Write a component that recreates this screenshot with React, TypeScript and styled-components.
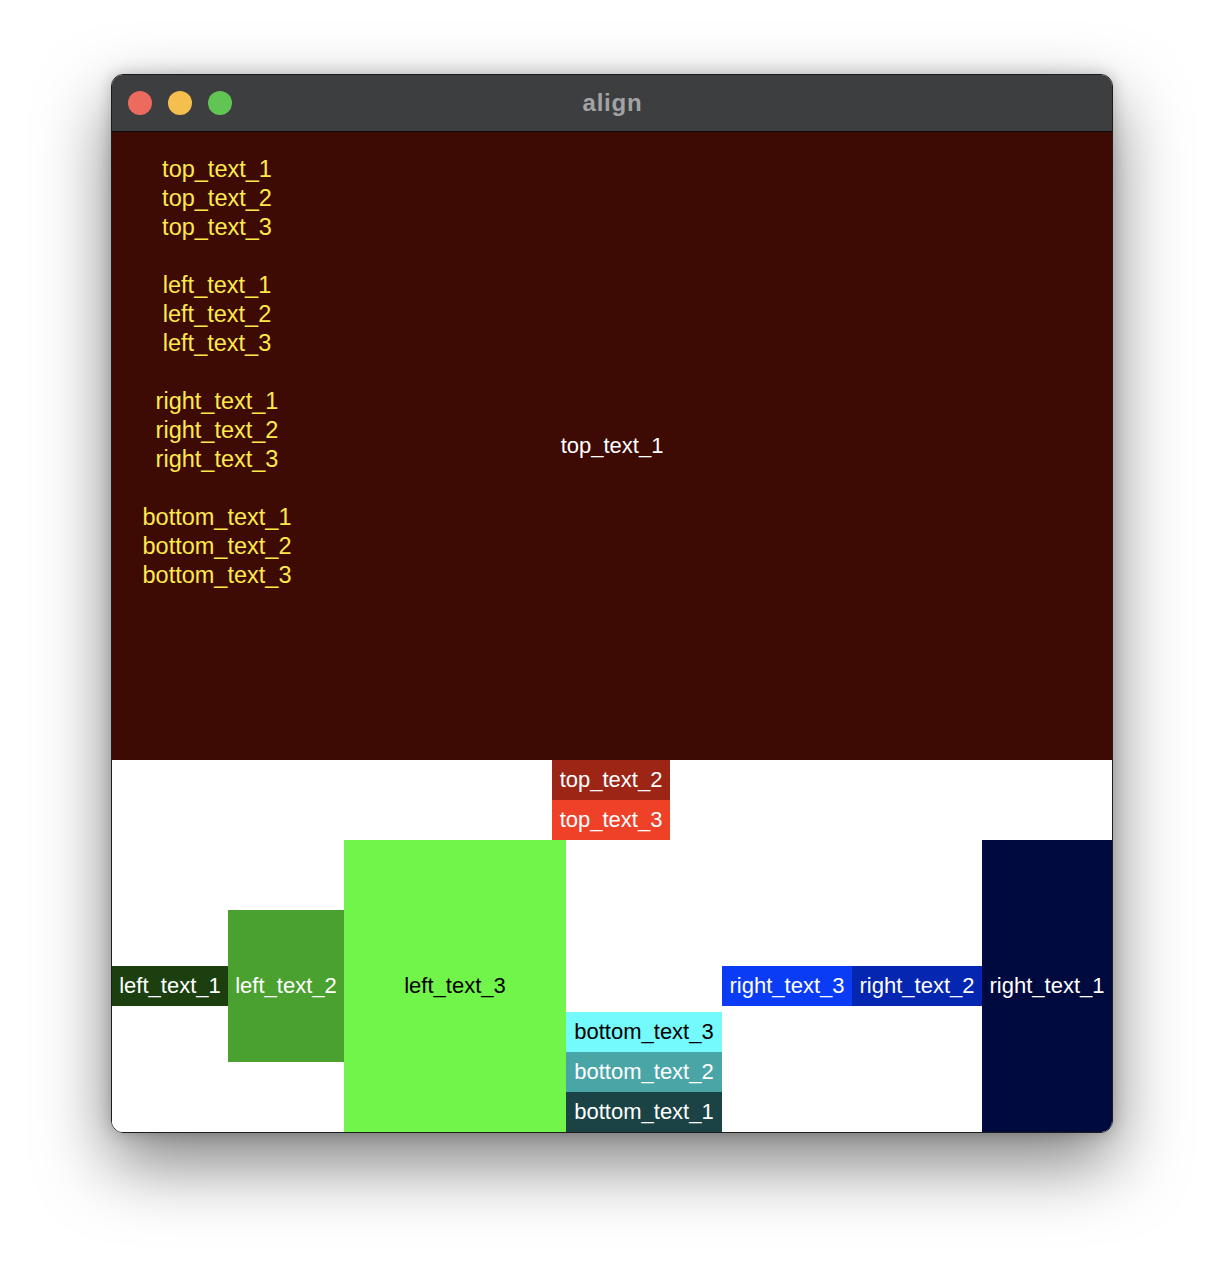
import React from "react";
import styled, { createGlobalStyle } from "styled-components";

const Global = createGlobalStyle`
  html, body { margin: 0; padding: 0; background: #ffffff; }
  body { font-family: "Liberation Sans", Arial, sans-serif; }
`;

const Page = styled.div`
  width: 1224px;
  height: 1280px;
  padding: 74px 0 0 111px;
  box-sizing: border-box;
  background: #ffffff;
`;

const Window = styled.div`
  width: 1002px;
  box-sizing: border-box;
  border: 1px solid #1c1c1c;
  border-radius: 12px;
  overflow: hidden;
  box-shadow: 0 30px 70px rgba(0, 0, 0, 0.5), 0 0 16px rgba(0, 0, 0, 0.22);
  display: flex;
  flex-direction: column;
`;

const TitleBar = styled.div`
  height: 57px;
  box-sizing: border-box;
  border-bottom: 1px solid #0c0c0c;
  background: #3d3e40;
  display: grid;
  grid-template-columns: 1fr;
  align-items: center;
`;

const Lights = styled.div`
  grid-area: 1 / 1;
  display: flex;
  gap: 16px;
  padding-left: 16px;
`;

const Light = styled.span<{ $c: string }>`
  width: 24px;
  height: 24px;
  border-radius: 50%;
  background: ${(p) => p.$c};
`;

const Title = styled.div`
  grid-area: 1 / 1;
  justify-self: center;
  color: #a3a3a4;
  font-family: "Liberation Sans", Arial, sans-serif;
  font-weight: bold;
  font-size: 24px;
  letter-spacing: 0.8px;
  margin-left: 1px;
`;

const Content = styled.div`
  width: 1000px;
  height: 1000px;
  background: #ffffff;
  display: flex;
  flex-direction: column;
  font-family: "Liberation Sans", Arial, sans-serif;
  font-size: 22px;
`;

const TopArea = styled.div`
  height: 628px;
  flex: none;
  background: #3d0a04;
  display: grid;
  grid-template-columns: 1fr;
  grid-template-rows: 1fr;
`;

const List = styled.div`
  grid-area: 1 / 1;
  justify-self: start;
  align-self: start;
  width: 210px;
  padding-top: 23px;
  text-align: center;
  color: #ffe94b;
  font-size: 23.5px;
  line-height: 29px;
  white-space: pre;
`;

const CenterLabel = styled.div`
  grid-area: 1 / 1;
  justify-self: center;
  align-self: center;
  color: #ffffff;
  line-height: 40px;
`;

const Stack = styled.div`
  display: flex;
  flex-direction: column;
  align-items: center;
  padding-right: 2px;
`;

const Row = styled.div`
  height: 292px;
  display: flex;
  align-items: center;
`;

const Label = styled.div<{ $bg: string; $fg?: string; $w: number; $h?: number; $fill?: boolean }>`
  flex: none;
  width: ${(p) => p.$w}px;
  height: ${(p) => (p.$fill ? "auto" : `${p.$h || 40}px`)};
  align-self: ${(p) => (p.$fill ? "stretch" : "auto")};
  background: ${(p) => p.$bg};
  color: ${(p) => p.$fg || "#ffffff"};
  display: flex;
  align-items: center;
  justify-content: center;
  white-space: nowrap;
`;

const BottomCol = styled.div`
  flex: none;
  width: 156px;
  align-self: stretch;
  display: flex;
  flex-direction: column;
  justify-content: flex-end;
`;

const listText = [
  "top_text_1",
  "top_text_2",
  "top_text_3",
  "",
  "left_text_1",
  "left_text_2",
  "left_text_3",
  "",
  "right_text_1",
  "right_text_2",
  "right_text_3",
  "",
  "bottom_text_1",
  "bottom_text_2",
  "bottom_text_3",
].join("\n");

export default function App() {
  return (
    <>
      <Global />
      <Page>
        <Window>
          <TitleBar>
            <Lights>
              <Light $c="#ed6a5e" />
              <Light $c="#f5bf4f" />
              <Light $c="#61c554" />
            </Lights>
            <Title>align</Title>
          </TitleBar>
          <Content>
            <TopArea>
              <List>{listText}</List>
              <CenterLabel>top_text_1</CenterLabel>
            </TopArea>
            <Stack>
              <Label $bg="#9c2515" $w={118}>top_text_2</Label>
              <Label $bg="#ee4128" $w={118}>top_text_3</Label>
            </Stack>
            <Row>
              <Label $bg="#1b3f0e" $w={116}>left_text_1</Label>
              <Label $bg="#4aa12f" $w={116} $h={152}>left_text_2</Label>
              <Label $bg="#72f54a" $fg="#000000" $w={222} $fill>left_text_3</Label>
              <BottomCol>
                <Label $bg="#74fafd" $fg="#000000" $w={156}>bottom_text_3</Label>
                <Label $bg="#4aa5a7" $w={156}>bottom_text_2</Label>
                <Label $bg="#1b4244" $w={156}>bottom_text_1</Label>
              </BottomCol>
              <Label $bg="#0a3cf5" $w={130}>right_text_3</Label>
              <Label $bg="#0426b0" $w={130}>right_text_2</Label>
              <Label $bg="#000a3e" $w={130} $fill>right_text_1</Label>
            </Row>
          </Content>
        </Window>
      </Page>
    </>
  );
}
